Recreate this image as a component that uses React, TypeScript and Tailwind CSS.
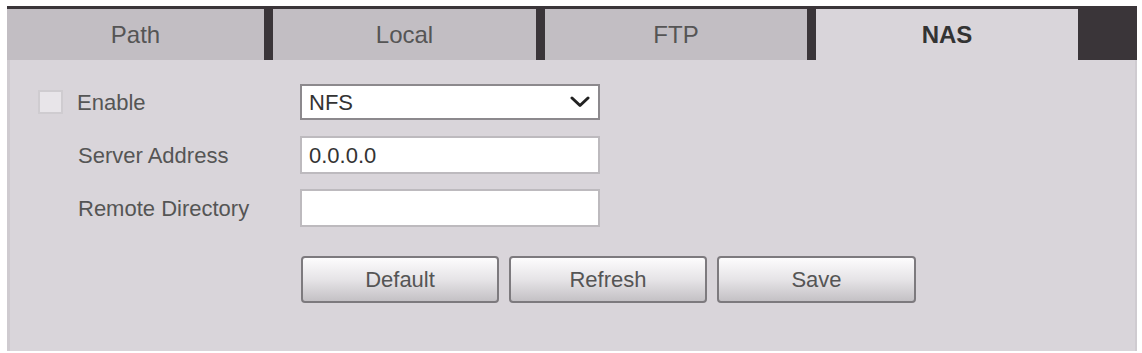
import React from "react";

const font = { fontFamily: '"Liberation Sans", Arial, sans-serif' };

function Tab({ label, w, active }: { label: string; w: string; active?: boolean }) {
  return (
    <div
      className={`${w} h-full flex items-center justify-center text-[24px] ${
        active ? "bg-[#d9d5da] text-[#333] font-bold" : "bg-[#c2bec3] text-[#555]"
      }`}
    >
      {label}
    </div>
  );
}

function Btn({ label, w }: { label: string; w: string }) {
  return (
    <button
      className={`${w} h-[47px] rounded-[4px] border-2 border-[#7d7a7e] bg-gradient-to-b from-[#fdfcfd] via-[#e6e4e7] to-[#c4c1c5] text-[22px] text-[#555] flex items-center justify-center`}
    >
      {label}
    </button>
  );
}

export default function App() {
  return (
    <div className="w-[1142px] h-[353px] bg-white pt-[6px] pl-[7px]" style={font}>
      <div className="w-[1130px]">
        <div className="flex h-[54px] bg-[#3a3539] pt-[3px] gap-[9px]">
          <Tab label="Path" w="w-[257px]" />
          <Tab label="Local" w="w-[263px]" />
          <Tab label="FTP" w="w-[262px]" />
          <Tab label="NAS" w="w-[262px]" active />
        </div>
        <div className="h-[291px] bg-[#d9d5da] border-l-[3px] border-r-[2px] border-[#cfcbd0] pt-[23px]">
          <div className="flex flex-col gap-[15px]">
            <div className="flex items-center h-[38px]">
              <div className="w-[290px] flex items-center pl-[28px]">
                <div className="w-[25px] h-[24px] bg-[#e8e5e9] border-2 border-[#cfccd0]" />
                <span className="ml-[14px] text-[22px] text-[#555]">Enable</span>
              </div>
              <div className="w-[300px] h-[36px] bg-white border-2 border-[#8c898d] flex items-center justify-between pl-[7px] pr-[8px]">
                <span className="text-[22px] text-[#333]">NFS</span>
                <svg width="20" height="12" viewBox="0 0 20 12">
                  <polyline points="2,2 10,9.5 18,2" fill="none" stroke="#222" strokeWidth="3" strokeLinecap="round" strokeLinejoin="round" />
                </svg>
              </div>
            </div>
            <div className="flex items-center h-[38px]">
              <div className="w-[290px] pl-[68px] text-[22px] text-[#555]">Server Address</div>
              <div className="w-[300px] h-[38px] bg-white border-2 border-[#bdbabe] flex items-center pl-[7px]">
                <span className="text-[22px] text-[#333]">0.0.0.0</span>
              </div>
            </div>
            <div className="flex items-center h-[38px]">
              <div className="w-[290px] pl-[68px] text-[22px] text-[#555]">Remote Directory</div>
              <div className="w-[300px] h-[38px] bg-white border-2 border-[#bdbabe]" />
            </div>
          </div>
          <div className="flex gap-[10px] mt-[29px] pl-[291px]">
            <Btn label="Default" w="w-[198px]" />
            <Btn label="Refresh" w="w-[198px]" />
            <Btn label="Save" w="w-[199px]" />
          </div>
        </div>
      </div>
    </div>
  );
}
